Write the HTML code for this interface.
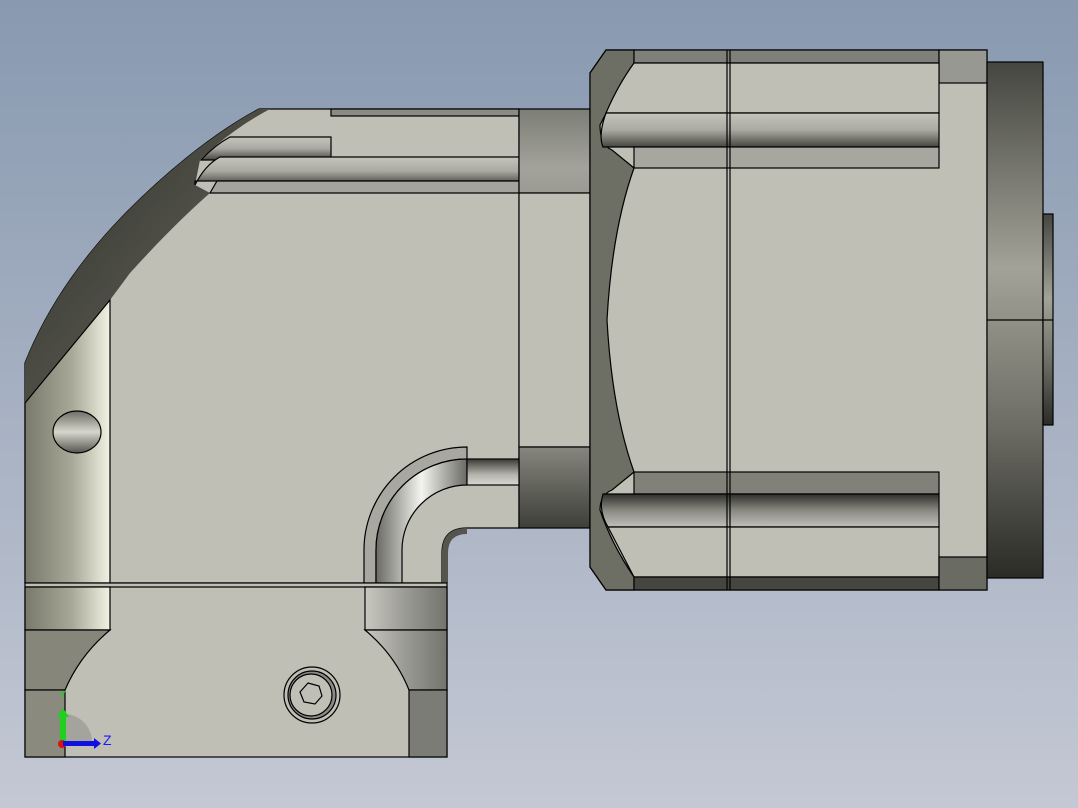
<!DOCTYPE html>
<html><head><meta charset="utf-8"><style>
html,body{margin:0;padding:0;width:1078px;height:808px;overflow:hidden}
svg{display:block}
text{font-family:"Liberation Sans",sans-serif}
</style></head><body>
<svg width="1078" height="808" viewBox="0 0 1078 808" xmlns="http://www.w3.org/2000/svg">
<defs>
<linearGradient id="bg" x1="0" y1="0" x2="0" y2="1"><stop offset="0" stop-color="#8899b0"/><stop offset="1" stop-color="#c4c8d4"/></linearGradient>
<linearGradient id="vstrip" x1="0" y1="0" x2="1" y2="0"><stop offset="0" stop-color="#7a7a6c"/><stop offset="0.55" stop-color="#a8a898"/><stop offset="1" stop-color="#f2f2e4"/></linearGradient>
<linearGradient id="vstripR" x1="0" y1="0" x2="1" y2="0"><stop offset="0" stop-color="#c8c8c0"/><stop offset="0.5" stop-color="#9a9a94"/><stop offset="1" stop-color="#74746e"/></linearGradient>
<linearGradient id="rib" x1="0" y1="0" x2="0" y2="1"><stop offset="0" stop-color="#c4c4bb"/><stop offset="0.5" stop-color="#aaaaa2"/><stop offset="1" stop-color="#45463f"/></linearGradient>
<linearGradient id="ribB" x1="0" y1="0" x2="0" y2="1"><stop offset="0" stop-color="#2e2f2a"/><stop offset="0.5" stop-color="#8a8a82"/><stop offset="1" stop-color="#c0c0b8"/></linearGradient>
<linearGradient id="flange" x1="0" y1="0" x2="0" y2="1"><stop offset="0" stop-color="#45463f"/><stop offset="0.4" stop-color="#a2a298"/><stop offset="0.7" stop-color="#6e6e66"/><stop offset="1" stop-color="#2a2b26"/></linearGradient>
<linearGradient id="collar" x1="0" y1="0" x2="0" y2="1"><stop offset="0" stop-color="#7c7d75"/><stop offset="0.7" stop-color="#a3a39b"/><stop offset="1" stop-color="#9a9a92"/></linearGradient>
<linearGradient id="collarB" x1="0" y1="0" x2="0" y2="1"><stop offset="0" stop-color="#86867e"/><stop offset="1" stop-color="#3e3f38"/></linearGradient>
<linearGradient id="dark" x1="0" y1="0" x2="1" y2="1"><stop offset="0" stop-color="#2f302b"/><stop offset="1" stop-color="#6a6a5e"/></linearGradient>
<linearGradient id="pipeV" x1="0" y1="0" x2="1" y2="0"><stop offset="0" stop-color="#6a6a64"/><stop offset="0.5" stop-color="#f4f4ee"/><stop offset="1" stop-color="#6a6a64"/></linearGradient>
<linearGradient id="pipeH" x1="0" y1="0" x2="0" y2="1"><stop offset="0" stop-color="#3a3b36"/><stop offset="0.6" stop-color="#b4b4ac"/><stop offset="1" stop-color="#d8d8d0"/></linearGradient>
<radialGradient id="hole" cx="0.5" cy="0.5" r="0.6"><stop offset="0" stop-color="#c8c8be"/><stop offset="1" stop-color="#55554c"/></radialGradient>
<linearGradient id="holeG" x1="0" y1="0" x2="0" y2="1"><stop offset="0" stop-color="#6e6e66"/><stop offset="0.5" stop-color="#d6d6cc"/><stop offset="1" stop-color="#55554e"/></linearGradient>
</defs>
<rect width="1078" height="808" fill="url(#bg)"/>
<g stroke="#000" stroke-width="1.2">
<!-- main housing -->
<path d="M25,363 C50,300 90,250 122,217 C160,178 210,135 259,109 L519,109 L519,528 L467,528 Q442,528 442,553 L442,583 L25,583 Z" fill="#bfbfb6"/>
<!-- dark curved band -->
<path d="M25,363 C50,300 90,250 122,217 C160,178 210,135 259,109 L270,109 C240,125 215,145 200,160 L195,185 L210,193 C185,215 160,240 130,273 L110,300 L25,403 Z" fill="url(#dark)" stroke="none"/>
<!-- ribs top -->
<rect x="331" y="109" width="188" height="7" fill="#8a8b83"/>
<path d="M201,160 Q215,145 230,137 L331,137 L331,160 Z" fill="url(#rib)"/>
<path d="M195,185 Q205,165 220,157 L519,157 L519,181 L195,181 Z" fill="url(#rib)"/>
<path d="M210,193 L217,181 L519,181 L519,193 Z" fill="#a4a49c"/>
<!-- left cylinder strip -->
<path d="M25,403 L110,300 L110,583 L25,583 Z" fill="url(#vstrip)"/>
<ellipse cx="77" cy="432" rx="24" ry="21" fill="url(#holeG)"/>
<!-- collar -->
<rect x="519" y="109" width="71" height="84" fill="url(#collar)"/>
<rect x="519" y="193" width="71" height="254" fill="#bfbfb6"/>
<rect x="519" y="447" width="71" height="81" fill="url(#collarB)"/>
<!-- pipe groove -->
<path d="M467,447 A103,103 0 0 0 364,550 L364,583 L376,583 L376,550 A91,91 0 0 1 467,459 Z" fill="#a8a8a0"/>
<path d="M467,459 A91,91 0 0 0 376,550 L376,583 L402,583 L402,550 A65,65 0 0 1 467,485 Z" fill="url(#pipeV)"/>
<rect x="467" y="459" width="52" height="26" fill="url(#pipeH)"/>
<path d="M467,528 Q442,528 442,553 L442,583 L448,583 L448,553 Q448,534 467,534 Z" fill="#55554e" stroke="none"/>
<!-- lower block -->
<rect x="25" y="583" width="422" height="174" fill="#bfbfb6"/>
<line x1="25" y1="587" x2="447" y2="587"/>
<path d="M25,587 L110,587 L110,630 L25,630 Z" fill="url(#vstrip)"/>
<path d="M25,630 L110,630 Q80,655 65,690 L25,690 Z" fill="#86867a"/>
<rect x="25" y="690" width="40" height="67" fill="#8a8a7e"/>
<path d="M365,587 L447,587 L447,630 L365,630 Z" fill="url(#vstripR)"/>
<path d="M365,630 L447,630 L447,690 L409,690 Q395,655 365,630 Z" fill="url(#vstripR)"/>
<rect x="409" y="690" width="38" height="67" fill="#7c7c76"/>
<circle cx="312" cy="695" r="28" fill="#bfbfb6"/>
<circle cx="312" cy="695" r="24" fill="#8a8a84"/>
<circle cx="311" cy="695" r="21" fill="#c0c0b7"/>
<polygon points="308,683 319,686 322,696 315,704 304,702 300,692" fill="#bfbfb6"/>
<!-- motor -->
<path d="M590,73 L606,50 L987,50 L987,590 L606,590 L590,567 Z" fill="#bfbfb6"/>
<path d="M590,73 L606,50 L634,50 L634,63 Q615,95 600,125 Q600,145 612,150 L634,168 Q612,230 607,320 Q612,410 634,472 L612,490 Q600,495 600,510 Q612,545 634,577 L634,590 L606,590 L590,567 Z" fill="#6d6e64"/>
<rect x="634" y="50" width="305" height="13" fill="#7f807a"/>
<rect x="939" y="50" width="48" height="33" fill="#979891"/>
<path d="M634,63 L939,63 L939,113 L606,113 Q618,85 634,63 Z" fill="#bfbfb6"/>
<path d="M606,113 L939,113 L939,147 L603,147 Q598,135 606,113 Z" fill="url(#rib)"/>
<rect x="634" y="147" width="305" height="21" fill="#a7a79f"/>
<rect x="634" y="472" width="305" height="22" fill="#81817a"/>
<path d="M603,494 L939,494 L939,527 L608,527 Q598,510 603,494 Z" fill="url(#ribB)"/>
<path d="M608,527 L939,527 L939,577 L634,577 Q620,550 608,527 Z" fill="#bfbfb6"/>
<rect x="634" y="577" width="305" height="13" fill="#45463f"/>
<rect x="939" y="557" width="48" height="33" fill="#6a6b63"/>
<line x1="727" y1="50" x2="727" y2="590"/>
<line x1="730" y1="50" x2="730" y2="590"/>
<rect x="987" y="62" width="56" height="516" fill="url(#flange)"/>
<rect x="1043" y="214" width="10" height="211" fill="url(#flange)"/>
<line x1="987" y1="320" x2="1053" y2="320"/>
</g>
<!-- triad -->
<path d="M64,742 A28,28 0 0 1 92,742 Z M64,714 A28,28 0 0 1 92,742 L64,742 Z" fill="#8a8a84" opacity="0.5"/>
<rect x="60" y="715" width="6" height="30" fill="#1fd01f"/>
<polygon points="57,717 63,708 69,717" fill="#1fd01f"/>
<circle cx="62" cy="744" r="4" fill="#e01010"/>
<rect x="63" y="741" width="32" height="5" fill="#1010e0"/>
<polygon points="94,738 101,743.5 94,749" fill="#1010e0"/>
<text x="103" y="745" font-size="14" fill="#1a1aff">Z</text>
<text x="59" y="698" font-size="11" fill="#1fd01f">Y</text>
</svg>
</body></html>
